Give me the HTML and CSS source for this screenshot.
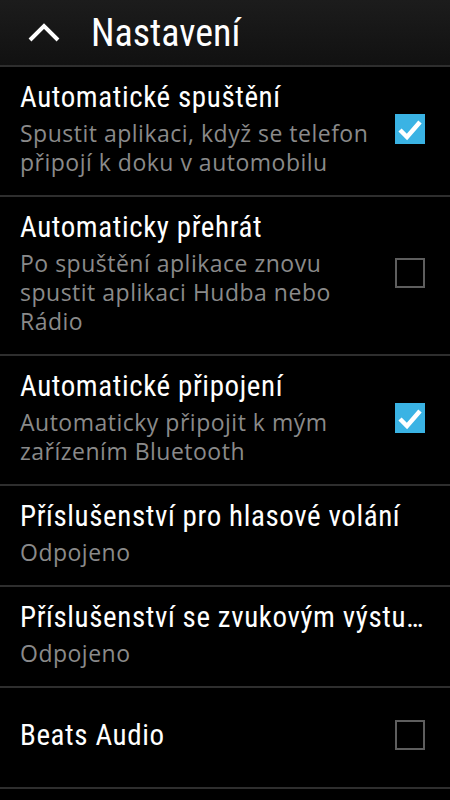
FILE: index.html
```html
<!DOCTYPE html>
<html lang="cs">
  <head>
    <meta charset="utf-8" />
    <title>Nastavení</title>
    <link rel="stylesheet" href="styles.css">
  </head>

  <body>
    <div class="header">
      <svg class="back-icon" width="40" height="24" viewBox="0 0 40 24">
        <polyline points="4,19 18,5 32,19" fill="none" stroke="#fff" stroke-width="4" />
      </svg>
      <h1 class="header-title">Nastavení</h1>
    </div>

    <ul class="settings">
      <li class="row">
        <div class="row-text">
          <div class="row-title">Automatické spuštění</div>
          <div class="row-sub">Spustit aplikaci, když se telefon připojí k doku v automobilu</div>
        </div>
        <span class="check checked">
          <svg width="30" height="30" viewBox="0 0 30 30">
            <polyline points="5,16 12,23 25,8" fill="none" stroke="#fff" stroke-width="4.5" />
          </svg>
        </span>
      </li>
      <li class="row">
        <div class="row-text">
          <div class="row-title">Automaticky přehrát</div>
          <div class="row-sub">Po spuštění aplikace znovu spustit aplikaci Hudba nebo Rádio</div>
        </div>
        <span class="check"></span>
      </li>
      <li class="row">
        <div class="row-text">
          <div class="row-title">Automatické připojení</div>
          <div class="row-sub">Automaticky připojit k mým zařízením Bluetooth</div>
        </div>
        <span class="check checked">
          <svg width="30" height="30" viewBox="0 0 30 30">
            <polyline points="5,16 12,23 25,8" fill="none" stroke="#fff" stroke-width="4.5" />
          </svg>
        </span>
      </li>
      <li class="row">
        <div class="row-text wide">
          <div class="row-title">Příslušenství pro hlasové volání</div>
          <div class="row-sub">Odpojeno</div>
        </div>
      </li>
      <li class="row">
        <div class="row-text wide">
          <div class="row-title">Příslušenství se zvukovým výstupem</div>
          <div class="row-sub">Odpojeno</div>
        </div>
      </li>
      <li class="row single">
        <div class="row-text">
          <div class="row-title">Beats Audio</div>
        </div>
        <span class="check"></span>
      </li>
    </ul>
  </body>
</html>
```
FILE: styles.css
```css
body {
  font-family: Roboto, "Liberation Sans", sans-serif;
  background-color: black;
  color: white;
  margin: 0;
  padding: 0;
}

.header {
  display: flex;
  align-items: center;
  height: 65px;
  padding-left: 26px;
  background: linear-gradient(to bottom, #1c1c1c, #111111);
  border-bottom: 2px solid #2e2e2e;
}

.back-icon {
  display: block;
  margin-right: 25px;
}

.header-title {
  font-family: "Roboto Condensed", Roboto, sans-serif;
  font-weight: normal;
  font-size: 38px;
  margin: 0;
  line-height: 1;
}

.settings {
  list-style: none;
  margin: 0;
  padding: 0;
}

.row {
  display: flex;
  align-items: center;
  padding: 13px 25px 18px 20px;
  border-bottom: 2px solid #2e2e2e;
}

.row.single {
  min-height: 68px;
}

.row-text {
  width: 358px;
  margin-right: 17px;
}

.row-text.wide {
  width: 405px;
  margin-right: 0;
}

.row-title {
  font-family: "Roboto Condensed", Roboto, sans-serif;
  font-size: 29px;
  line-height: 34px;
  letter-spacing: 0.6px;
  white-space: nowrap;
  overflow: hidden;
  text-overflow: ellipsis;
}

.row-sub {
  font-family: "Open Sans", Roboto, sans-serif;
  font-size: 23px;
  line-height: 29px;
  letter-spacing: 0.5px;
  color: #8a8a8a;
  margin-top: 5px;
}

.check {
  display: block;
  box-sizing: border-box;
  width: 30px;
  height: 30px;
  border: 2px solid #5e5e5e;
  flex-shrink: 0;
}

.check.checked {
  border: none;
  background-color: #3ab3e4;
}

.check svg {
  display: block;
}
```
